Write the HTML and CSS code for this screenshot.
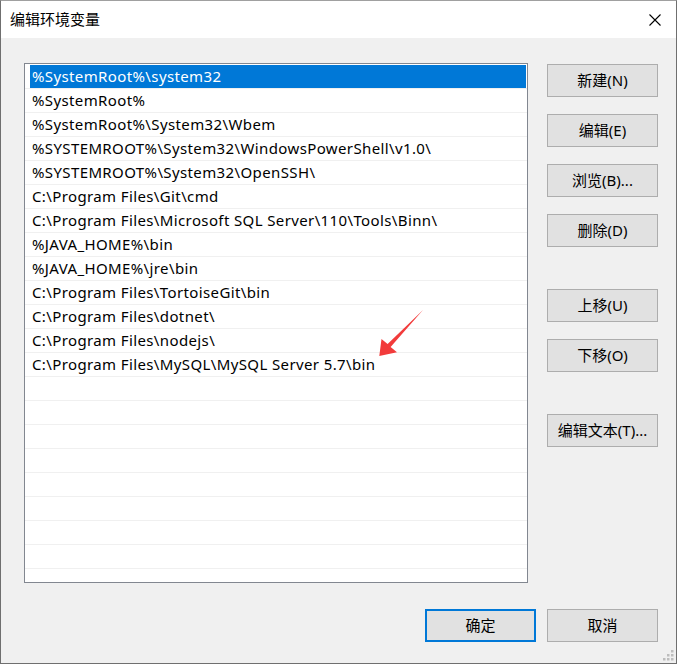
FILE: index.html
```html
<!DOCTYPE html>
<html lang="zh-CN">
<head>
<meta charset="utf-8">
<title>编辑环境变量</title>
<link rel="stylesheet" href="styles.css">
</head>
<body>
<div class="window">
  <div class="titlebar">
    <span class="title">编辑环境变量</span>
    <span class="close">
      <svg width="12" height="12" viewBox="0 0 12 12"><path d="M0.5 0.5 L11.5 11.5 M11.5 0.5 L0.5 11.5" stroke="#000" stroke-width="1.1" fill="none"/></svg>
    </span>
  </div>
  <div class="main">
    <div class="list">
      <div class="row selected"><span class="item">%SystemRoot%\system32</span></div>
      <div class="row"><span class="item">%SystemRoot%</span></div>
      <div class="row"><span class="item">%SystemRoot%\System32\Wbem</span></div>
      <div class="row"><span class="item">%SYSTEMROOT%\System32\WindowsPowerShell\v1.0\</span></div>
      <div class="row"><span class="item">%SYSTEMROOT%\System32\OpenSSH\</span></div>
      <div class="row"><span class="item">C:\Program Files\Git\cmd</span></div>
      <div class="row"><span class="item">C:\Program Files\Microsoft SQL Server\110\Tools\Binn\</span></div>
      <div class="row"><span class="item">%JAVA_HOME%\bin</span></div>
      <div class="row"><span class="item">%JAVA_HOME%\jre\bin</span></div>
      <div class="row"><span class="item">C:\Program Files\TortoiseGit\bin</span></div>
      <div class="row"><span class="item">C:\Program Files\dotnet\</span></div>
      <div class="row"><span class="item">C:\Program Files\nodejs\</span></div>
      <div class="row"><span class="item">C:\Program Files\MySQL\MySQL Server 5.7\bin</span></div>
      <div class="row"></div>
      <div class="row"></div>
      <div class="row"></div>
      <div class="row"></div>
      <div class="row"></div>
      <div class="row"></div>
      <div class="row"></div>
      <div class="row"></div>
    </div>
    <div class="side">
      <button class="btn">新建(N)</button>
      <button class="btn">编辑(E)</button>
      <button class="btn">浏览(B)...</button>
      <button class="btn">删除(D)</button>
      <button class="btn group">上移(U)</button>
      <button class="btn">下移(O)</button>
      <button class="btn group">编辑文本(T)...</button>
    </div>
  </div>
  <div class="footer">
    <button class="btn primary">确定</button>
    <button class="btn">取消</button>
  </div>
  <svg class="arrow" width="50" height="52" viewBox="376 308 50 52">
    <polygon points="379.3,356 381.5,339 387.6,344 423,310 390.6,347 397,352.2" fill="#f23b3b"/>
  </svg>
  <svg class="grip" width="12" height="12" viewBox="0 0 12 12">
    <rect x="9" y="1" width="2.5" height="2.5" fill="#bdbdbd"/>
    <rect x="5" y="5" width="2.5" height="2.5" fill="#bdbdbd"/>
    <rect x="9" y="5" width="2.5" height="2.5" fill="#bdbdbd"/>
    <rect x="1" y="9" width="2.5" height="2.5" fill="#bdbdbd"/>
    <rect x="5" y="9" width="2.5" height="2.5" fill="#bdbdbd"/>
    <rect x="9" y="9" width="2.5" height="2.5" fill="#bdbdbd"/>
  </svg>
</div>
</body>
</html>
```
FILE: styles.css
```css
* { box-sizing: border-box; }
html, body { margin: 0; padding: 0; }
body {
  width: 677px;
  height: 664px;
  font-family: "Noto Sans", "Noto Sans CJK SC", sans-serif;
  font-size: 15px;
  color: #000;
  background: #f0f0f0;
}
.window {
  position: relative;
  width: 677px;
  height: 664px;
  background: #f0f0f0;
  border: 1px solid #6f6f6f;
  border-top-color: #a0a0a0;
  display: flex;
  flex-direction: column;
}
.titlebar {
  height: 37px;
  flex: none;
  background: #fff;
  display: flex;
  align-items: center;
  justify-content: space-between;
  padding: 0 15px 0 9px;
}
.title {
  font-family: "Noto Sans CJK SC", sans-serif;
  font-size: 15px;
  line-height: 20px;
  padding-bottom: 1px;
}
.close {
  display: flex;
  width: 12px;
  height: 12px;
  margin-top: 1px;
}
.main {
  display: flex;
  padding: 25px 0 0 23px;
}
.list {
  width: 504px;
  height: 520px;
  border: 1px solid #828790;
  background: #fff;
  padding-top: 1px;
  overflow: hidden;
}
.row {
  height: 24px;
  border-bottom: 1px solid #f0f0f0;
  display: flex;
}
.item {
  flex: 1;
  margin-left: 5px;
  margin-right: 1px;
  padding-left: 2px;
  line-height: 23px;
  white-space: nowrap;
  letter-spacing: 0.38px;
}
.selected .item {
  background: #0078d7;
  color: #fff;
}
.side {
  display: flex;
  flex-direction: column;
  gap: 17px;
  margin-left: 19px;
  padding-top: 1px;
}
.btn {
  width: 111px;
  height: 33px;
  margin: 0;
  padding: 0 0 2px 0;
  border: 1px solid #adadad;
  background: #e1e1e1;
  font-family: "Noto Sans", "Noto Sans CJK SC", sans-serif;
  font-size: 15px;
  color: #000;
  line-height: 20px;
}
.btn.group { margin-top: 25px; }
.btn.primary { border: 2px solid #0078d7; }
.footer {
  display: flex;
  justify-content: flex-end;
  gap: 11px;
  padding: 26px 18px 0 0;
}
.arrow {
  position: absolute;
  left: 375px;
  top: 307px;
}
.grip {
  position: absolute;
  right: 2px;
  bottom: 2px;
}
```
